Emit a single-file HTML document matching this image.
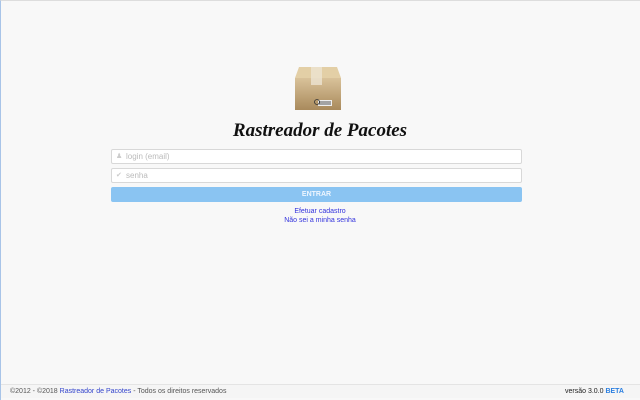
<!DOCTYPE html>
<html><head><meta charset="utf-8"><style>
*{box-sizing:border-box;margin:0;padding:0}
body{width:640px;height:400px;background:#f8f8f8;font-family:"Liberation Sans",sans-serif;position:relative;overflow:hidden;border-left:1px solid #a8c4e8;border-top:1px solid #ddd}
.inp{position:absolute;left:110px;width:411px;height:15px;background:#fff;border:1px solid #d8d8d8;border-radius:2px;font-size:8px;color:#bbb;padding-left:14px;line-height:13px}
.ic{position:absolute;left:4px;top:3px;width:6px;height:7px;color:#ccc;font-size:7px;line-height:7px}
.btn{position:absolute;left:110px;top:186px;width:411px;height:15px;background:#8ac4f2;border-radius:2px;color:#eef6ff;font-size:7px;font-weight:bold;text-align:center;line-height:15px}
.lk{position:absolute;left:-1px;width:640px;text-align:center;font-size:7px;color:#3333dd}
.foot{position:absolute;left:0;top:383px;width:640px;height:14px;border-top:1px solid #e4e4e4;background:#f5f5f5;font-size:7px;color:#555;line-height:13px}
</style></head><body>
<svg style="position:absolute;left:292px;top:63px" width="50" height="48" viewBox="0 0 50 48">
<defs><linearGradient id="g" x1="0" y1="0" x2="0" y2="1"><stop offset="0" stop-color="#d9c29a"/><stop offset="1" stop-color="#a98a5c"/></linearGradient></defs>
<path d="M6 3 L44 3 L48 14 L2 14 Z" fill="#e3cfa6"/>
<rect x="2" y="14" width="46" height="32" fill="url(#g)"/>
<rect x="18" y="3" width="11" height="18" fill="#ece4d2" opacity=".8"/>
<rect x="25" y="36" width="14" height="6" fill="#eee"/>
<path d="M27 37v4M29 37v4M31 37v4M33 37v4M35 37v4M37 37v4" stroke="#333" stroke-width=".8"/>
<circle cx="24" cy="38" r="2.5" fill="none" stroke="#333" stroke-width=".8"/>
</svg>
<div style="position:absolute;left:-1px;top:119px;width:640px;text-align:center;font-family:'Liberation Serif',serif;font-style:italic;font-weight:bold;font-size:19px;color:#111">Rastreador de Pacotes</div>
<div class="inp" style="top:148px"><span class="ic">&#9823;</span>login (email)</div>
<div class="inp" style="top:167px"><span class="ic">&#10004;</span>senha</div>
<div class="btn">ENTRAR</div>
<div class="lk" style="top:207px">Efetuar cadastro</div>
<div class="lk" style="top:216px">Não sei a minha senha</div>
<div class="foot"><span style="position:absolute;left:9px">©2012 - ©2018 <span style="color:#3344cc">Rastreador de Pacotes</span> - Todos os direitos reservados</span><span style="position:absolute;right:17px;color:#222">versão 3.0.0 <b style="color:#2b7fe0">BETA</b></span></div>
</body></html>
